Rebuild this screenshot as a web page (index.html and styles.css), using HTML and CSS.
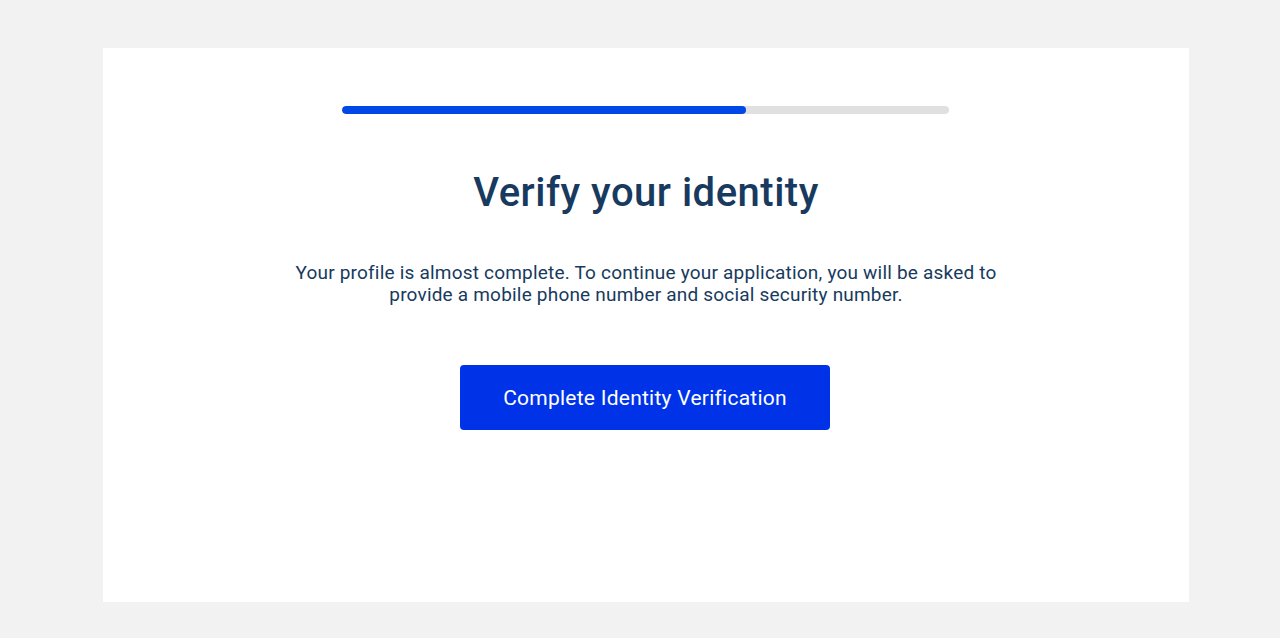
FILE: index.html
```html
<!DOCTYPE html>
<html lang="en">
<head>
  <meta charset="UTF-8">
  <title>Verify your identity</title>
  <link rel="stylesheet" href="styles.css">
</head>
<body>
  <main class="card">
    <div class="progress">
      <div class="progress-fill" style="width: 66.7%"></div>
    </div>

    <h1 class="title">Verify your identity</h1>

    <p class="intro">Your profile is almost complete. To continue your application, you will be asked to provide a mobile phone number and social security number.</p>

    <button class="primary">Complete Identity Verification</button>
  </main>
</body>
</html>
```

FILE: styles.css
```css
html, body {
  margin: 0;
  padding: 0;
}
body {
  background: #f2f2f2;
  font-family: Roboto, "Liberation Sans", Arial, sans-serif;
  color: #173a5e;
  padding: 48px 91px 36px 103px;
}
.card {
  background: #fff;
  height: 554px;
  box-sizing: border-box;
  padding-top: 58px;
  display: flex;
  flex-direction: column;
  align-items: center;
}
.progress {
  width: 607px;
  height: 8px;
  margin-left: -2px;
  border-radius: 4px;
  background: #e0e0e0;
  overflow: hidden;
}
.progress-fill {
  height: 100%;
  background: #0047e8;
  border-radius: 4px;
}
.title {
  font-size: 40px;
  font-weight: 500;
  letter-spacing: 0.5px;
  margin: 51px 0 0;
  line-height: 56px;
}
.intro {
  font-size: 19px;
  line-height: 22px;
  letter-spacing: 0.2px;
  text-align: center;
  max-width: 740px;
  margin: 41px 0 0;
}
.primary {
  margin-top: 59px;
  margin-left: -2px;
  width: 370px;
  height: 65px;
  border: none;
  border-radius: 4px;
  background: #0033e8;
  color: #fff;
  font-family: inherit;
  font-size: 21px;
  letter-spacing: 0.25px;
}
```
